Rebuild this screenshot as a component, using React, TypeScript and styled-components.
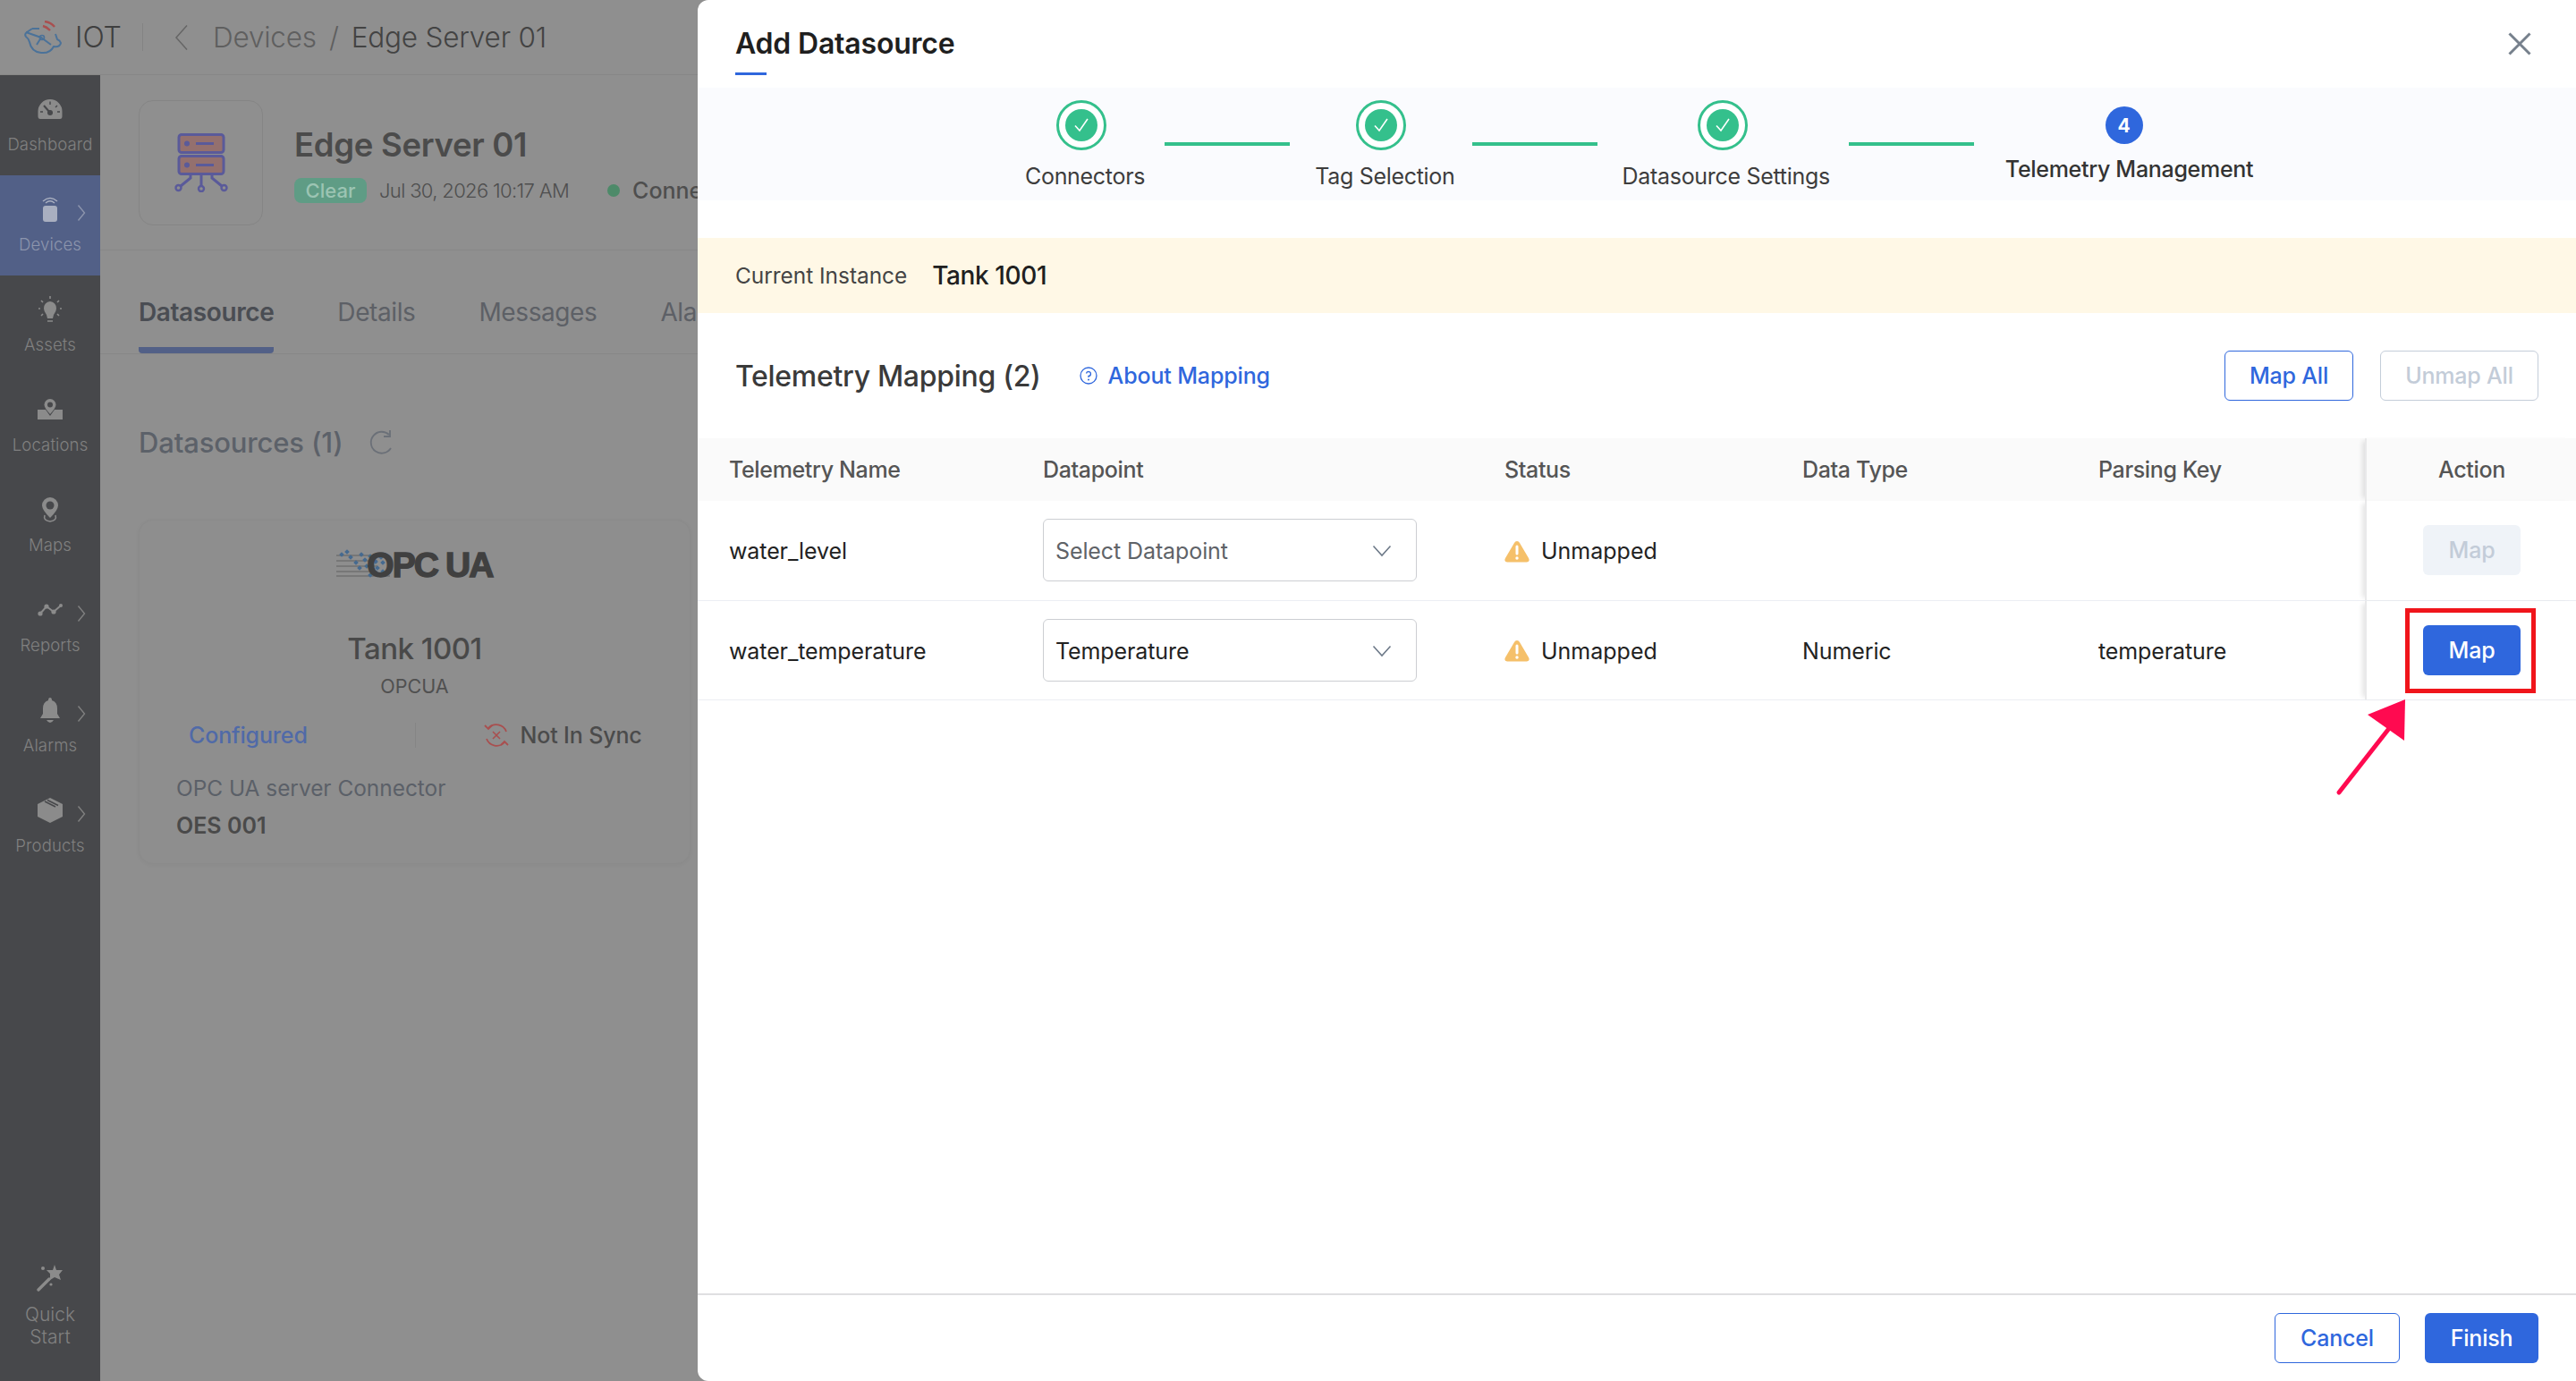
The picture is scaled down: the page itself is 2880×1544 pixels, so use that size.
import React from "react";
import styled, { createGlobalStyle } from "styled-components";

const Global = createGlobalStyle`
  html, body { margin: 0; padding: 0; background: #8f8f8f; }
  * { box-sizing: border-box; }
  body { font-family: Inter, "Noto Sans", "Liberation Sans", sans-serif; }
`;

const Page = styled.div`
  position: relative;
  width: 2880px;
  height: 1544px;
  overflow: hidden;
  background: #8f8f8f;
  display: flex;
  flex-direction: column;
`;

/* ---------- dimmed page behind the modal ---------- */
const TopBar = styled.header`
  height: 84px;
  flex: none;
  display: flex;
  align-items: center;
  padding-left: 26px;
  border-bottom: 1px solid #878787;
`;
const Brand = styled.span`
  font-size: 32px;
  font-weight: 300;
  color: #3f3f3f;
  margin-left: 14px;
  width: 50px;
`;
const BarDivider = styled.span`
  width: 1px;
  height: 31px;
  background: #838383;
  margin-left: 25px;
`;
const BackIcon = styled.svg`
  width: 16px;
  height: 30px;
  margin-left: 35px;
  margin-right: 27px;
`;
const Crumb = styled.span<{ $dark?: boolean }>`
  font-size: 31.5px;
  font-weight: 300;
  color: ${(p) => (p.$dark ? "#434343" : "#5f5f5f")};
  letter-spacing: -0.2px;
`;
const CrumbSlash = styled(Crumb)`
  margin: 0 14px;
  color: #5f5f5f;
`;
const Body = styled.div`
  flex: 1;
  display: flex;
  min-height: 0;
`;
const Sidebar = styled.nav`
  width: 112px;
  flex: none;
  background: #47484b;
  display: flex;
  flex-direction: column;
`;
const NavItem = styled.div<{ $active?: boolean }>`
  position: relative;
  height: 112px;
  display: flex;
  flex-direction: column;
  align-items: center;
  padding-top: 20px;
  background: ${(p) => (p.$active ? "#526087" : "transparent")};
  color: ${(p) => (p.$active ? "#8c95ad" : "#808080")};
`;
const NavIconSlot = styled.div`
  height: 36px;
  width: 36px;
  display: flex;
  align-items: center;
  justify-content: center;
  color: #8b8b8b;
`;
const NavLabel = styled.span`
  margin-top: 8px;
  font-size: 18.6px;
  line-height: 26px;
  font-weight: 300;
  letter-spacing: 0.1px;
  white-space: nowrap;
`;
const NavChevron = styled.svg`
  position: absolute;
  left: 86px;
  top: 32px;
  width: 10px;
  height: 20px;
`;
const NavSpacer = styled.div`
  flex: 1;
`;
const QuickItem = styled.div`
  height: 112px;
  margin-bottom: 21px;
  display: flex;
  flex-direction: column;
  align-items: center;
  color: #808080;
`;
const QuickLabel = styled.span`
  margin-top: 10px;
  font-size: 21px;
  line-height: 25px;
  font-weight: 300;
  text-align: center;
`;
const Main = styled.main`
  flex: 1;
  min-width: 0;
  color: #4a4a4a;
`;
const DeviceHead = styled.section`
  height: 196px;
  padding: 28px 0 0 43px;
  display: flex;
  border-bottom: 1px solid #878787;
`;
const DeviceTile = styled.div`
  width: 139px;
  height: 140px;
  border: 1px solid #858585;
  border-radius: 16px;
  display: flex;
  align-items: center;
  justify-content: center;
`;
const DeviceInfo = styled.div`
  margin-left: 35px;
  padding-top: 28px;
`;
const DeviceTitle = styled.div`
  font-size: 36.5px;
  line-height: 44px;
  font-weight: 600;
  color: #4b4b4b;
  letter-spacing: -0.3px;
`;
const MetaRow = styled.div`
  display: flex;
  align-items: center;
  margin-top: 14px;
  white-space: nowrap;
`;
const ClearBadge = styled.span`
  width: 81px;
  height: 28px;
  border-radius: 8px;
  background: #5f9c85;
  color: #9cc4b3;
  font-size: 22px;
  font-weight: 500;
  display: flex;
  align-items: center;
  justify-content: center;
`;
const MetaDate = styled.span`
  margin-left: 14px;
  font-size: 22px;
  font-weight: 300;
  color: #4e4e4e;
  letter-spacing: -0.65px;
`;
const StatusDot = styled.span`
  width: 14px;
  height: 14px;
  border-radius: 50%;
  background: #4d8a69;
  margin-left: 43px;
`;
const MetaState = styled.span`
  margin-left: 14px;
  font-size: 25px;
  font-weight: 500;
  color: #4e4e4e;
`;
const Tabs = styled.div`
  height: 116px;
  display: flex;
  align-items: flex-end;
  padding-left: 43px;
  gap: 71px;
  border-bottom: 1px solid #878787;
  white-space: nowrap;
`;
const Tab = styled.div<{ $active?: boolean }>`
  height: 76px;
  padding-top: 12px;
  font-size: 28px;
  line-height: 36px;
  font-weight: ${(p) => (p.$active ? 600 : 400)};
  color: ${(p) => (p.$active ? "#4a4d53" : "#5d6066")};
  border-bottom: 7px solid ${(p) => (p.$active ? "#526087" : "transparent")};
  border-radius: 0 0 4px 4px;
  letter-spacing: -0.4px;
`;
const SectionHead = styled.div`
  display: flex;
  align-items: center;
  padding: 79px 0 0 43px;
  gap: 29px;
`;
const SectionTitle = styled.h2`
  margin: 0;
  font-size: 31px;
  line-height: 40px;
  font-weight: 500;
  color: #5c6169;
  letter-spacing: -0.15px;
`;
const SourceCard = styled.article`
  margin: 66px 0 0 43px;
  width: 617px;
  height: 385px;
  border-radius: 16px;
  background: #8e8e8e;
  box-shadow: 0 1px 5px rgba(0, 0, 0, 0.04);
  border: 1px solid #8b8b8b;
  display: flex;
  flex-direction: column;
  align-items: center;
  padding-top: 31px;
`;
const OpcLogo = styled.div`
  position: relative;
  width: 176px;
  height: 34px;
  display: flex;
  justify-content: flex-end;
  align-items: flex-end;
`;
const OpcArt = styled.svg`
  position: absolute;
  left: 0;
  top: 0;
  width: 176px;
  height: 34px;
`;
const OpcWord = styled.span`
  position: relative;
  font-family: "Liberation Sans", Arial, sans-serif;
  font-size: 39px;
  line-height: 30px;
  font-weight: 700;
  color: #404040;
  letter-spacing: -1.9px;
  -webkit-text-stroke: 1.4px #404040;
  margin-right: 1px;
`;
const CardName = styled.div`
  margin-top: 57px;
  font-size: 33px;
  line-height: 42px;
  font-weight: 500;
  color: #494949;
  letter-spacing: -0.5px;
`;
const CardType = styled.div`
  margin-top: 7px;
  font-size: 21.5px;
  line-height: 28px;
  color: #505050;
`;
const CardStates = styled.div`
  width: 100%;
  margin-top: 27px;
  display: grid;
  grid-template-columns: 1fr 1fr;
`;
const CardState = styled.div<{ $blue?: boolean }>`
  height: 28px;
  display: flex;
  align-items: center;
  gap: 13px;
  font-size: 25px;
  font-weight: 500;
  letter-spacing: -0.15px;
  color: ${(p) => (p.$blue ? "#506aa8" : "#4b4b4b")};
  padding-left: ${(p) => (p.$blue ? "55px" : "76px")};
  & + & {
    border-left: 1px solid #858585;
  }
`;
const CardMeta = styled.div`
  width: 100%;
  padding-left: 41px;
  margin-top: 29px;
`;
const MetaLabel = styled.div`
  font-size: 24.4px;
  line-height: 32px;
  color: #5b6068;
  font-weight: 400;
`;
const MetaValue = styled.div`
  margin-top: 10px;
  font-size: 25px;
  line-height: 32px;
  font-weight: 600;
  color: #4a4a4a;
`;

/* ---------- modal ---------- */
const Modal = styled.section`
  position: absolute;
  top: 0;
  right: 0;
  bottom: 0;
  width: 2100px;
  background: #fff;
  border-radius: 12px 0 0 12px;
  display: flex;
  flex-direction: column;
  color: #222;
`;
const ModalHead = styled.div`
  position: relative;
  height: 98px;
  flex: none;
  padding: 30px 0 0 42px;
`;
const ModalTitle = styled.h1`
  margin: 0;
  font-size: 32px;
  line-height: 38px;
  font-weight: 600;
  color: #1f1f1f;
  letter-spacing: -0.2px;
`;
const TitleRule = styled.div`
  width: 35px;
  height: 3px;
  margin-top: 13px;
  background: #2f67dd;
`;
const CloseIcon = styled.svg`
  position: absolute;
  top: 36px;
  right: 50px;
  width: 26px;
  height: 26px;
`;
const Stepper = styled.div`
  height: 126px;
  flex: none;
  background: #fafbfe;
  display: flex;
  align-items: flex-start;
  padding: 14px 0 0 366px;
`;
const Step = styled.div`
  display: flex;
  flex-direction: column;
  align-items: center;
  white-space: nowrap;
`;
const DoneRing = styled.div`
  width: 56px;
  height: 56px;
  border-radius: 50%;
  border: 3px solid #34c08c;
  display: flex;
  align-items: center;
  justify-content: center;
  background: #fff;
  margin-right: 8px;
`;
const DoneDisc = styled.div`
  width: 36px;
  height: 36px;
  border-radius: 50%;
  background: #34c08c;
  display: flex;
  align-items: center;
  justify-content: center;
`;
const CurrentDisc = styled.div`
  width: 42px;
  height: 42px;
  margin-top: 7px;
  border-radius: 50%;
  background: #2f67dd;
  color: #fff;
  font-size: 21px;
  font-weight: 700;
  display: flex;
  align-items: center;
  justify-content: center;
  margin-right: 12px;
`;
const StepLabel = styled.span<{ $current?: boolean }>`
  margin-top: ${(p) => (p.$current ? "13px" : "14px")};
  font-size: 25px;
  line-height: 30px;
  font-weight: ${(p) => (p.$current ? 500 : 400)};
  color: ${(p) => (p.$current ? "#333" : "#3d3d3d")};
  letter-spacing: -0.3px;
`;
const StepLine = styled.div<{ $w: number; $l: number; $r: number }>`
  width: ${(p) => p.$w}px;
  height: 4px;
  margin: 47px ${(p) => p.$r}px 0 ${(p) => p.$l}px;
  background: #34c08c;
  flex: none;
`;
const Banner = styled.div`
  height: 84px;
  flex: none;
  margin-top: 42px;
  background: #fff8e6;
  display: flex;
  align-items: center;
  padding-left: 42px;
  gap: 28px;
`;
const BannerLabel = styled.span`
  font-size: 24.4px;
  color: #444;
`;
const BannerValue = styled.span`
  font-size: 28px;
  font-weight: 500;
  color: #202020;
  letter-spacing: -0.4px;
`;
const MapHead = styled.div`
  height: 140px;
  flex: none;
  display: flex;
  align-items: center;
  padding: 0 42px;
`;
const MapTitle = styled.h2`
  margin: 0;
  font-size: 32px;
  font-weight: 500;
  color: #3a3a3a;
  letter-spacing: -0.3px;
`;
const AboutLink = styled.a`
  display: flex;
  align-items: center;
  gap: 12px;
  margin-left: 43px;
  color: #2f67dd;
  font-size: 25px;
  font-weight: 500;
  letter-spacing: -0.15px;
`;
const HelpIcon = styled.svg`
  width: 20px;
  height: 20px;
`;
const HeadActions = styled.div`
  margin-left: auto;
  display: flex;
  gap: 30px;
`;
const Btn = styled.button<{ $kind: "outline" | "ghost" | "solid" | "off"; $w: number }>`
  width: ${(p) => p.$w}px;
  height: 56px;
  padding: 0;
  font-family: inherit;
  font-size: 25px;
  font-weight: 500;
  letter-spacing: -0.2px;
  border-radius: 6px;
  border: ${(p) =>
    p.$kind === "outline"
      ? "1.5px solid #2f67dd"
      : p.$kind === "ghost"
      ? "1.5px solid #c4cdd9"
      : "none"};
  background: ${(p) =>
    p.$kind === "solid" ? "#2f67dd" : p.$kind === "off" ? "#eff3f8" : "#fff"};
  color: ${(p) =>
    p.$kind === "solid"
      ? "#fff"
      : p.$kind === "outline"
      ? "#2f67dd"
      : "#c3ccd8"};
`;
const Table = styled.div`
  flex: 1;
  min-height: 0;
`;
const Row = styled.div<{ $head?: boolean }>`
  display: grid;
  grid-template-columns: 351px 516px 333px 331px 298px 236px;
  padding-left: 35px;
  height: ${(p) => (p.$head ? "70px" : "111.5px")};
  align-items: center;
  font-size: 25px;
  letter-spacing: ${(p) => (p.$head ? "-0.35px" : "-0.1px")};
  background: ${(p) => (p.$head ? "#fafafa" : "#fff")};
  color: ${(p) => (p.$head ? "#555" : "#222")};
  font-weight: ${(p) => (p.$head ? 500 : 400)};
  border-bottom: ${(p) => (p.$head ? "none" : "1.5px solid #eceef3")};
`;
const Cell = styled.div<{ $body?: boolean }>`
  padding-top: ${(p) => (p.$body ? "2px" : "0")};
`;
const ActionCell = styled.div`
  height: 100%;
  display: flex;
  align-items: center;
  justify-content: center;
  padding-left: 1px;
  border-left: 2px solid #e9e9ea;
  box-shadow: -6px 0 5px -3px rgba(0, 0, 0, 0.1);
  background: inherit;
`;
const Select = styled.div<{ $placeholder?: boolean }>`
  width: 418px;
  height: 70px;
  border: 1.5px solid #ccced2;
  border-radius: 6px;
  display: flex;
  align-items: center;
  justify-content: space-between;
  padding: 2px 27px 0 13px;
  color: ${(p) => (p.$placeholder ? "#5f6368" : "#222")};
`;
const Chevron = styled.svg`
  width: 22px;
  height: 14px;
`;
const StatusCell = styled.div`
  display: flex;
  align-items: center;
  gap: 13px;
  padding-top: 2px;
  letter-spacing: 0;
`;
const WarnIcon = styled.svg`
  width: 28px;
  height: 25px;
`;
const Footer = styled.footer`
  height: 98px;
  flex: none;
  border-top: 2px solid #dfdfe1;
  display: flex;
  justify-content: flex-end;
  gap: 28px;
  padding: 20px 42px 0 0;
`;
const CalloutBox = styled.div`
  position: absolute;
  left: 1909px;
  top: 680px;
  width: 146px;
  height: 95px;
  border: 5px solid #f0151b;
`;
const CalloutArrow = styled.svg`
  position: absolute;
  left: 1820px;
  top: 775px;
  width: 100px;
  height: 120px;
`;

const Check = () => (
  <svg width="20" height="18" viewBox="0 0 20 18">
    <path d="M3 9.5 L8 15 L17 2" fill="none" stroke="#fff" strokeWidth="1.6" />
  </svg>
);

const Arrow = () => (
  <NavChevron viewBox="0 0 10 20">
    <path d="M1.5 1.5 L8.5 10 L1.5 18.5" fill="none" stroke="currentColor" strokeWidth="1.4" />
  </NavChevron>
);

const navItems: { label: string; chevron?: boolean; active?: boolean; icon: React.ReactNode }[] = [
  {
    label: "Dashboard",
    icon: (
      <svg width="28" height="24" viewBox="0 0 28 24">
        <path d="M14 1 A13.5 13.5 0 0 1 27.5 15 V20 Q27.5 23 25 23 H3 Q.5 23 .5 20 V15 A13.5 13.5 0 0 1 14 1Z" fill="#8b8b8b" />
        <path d="M7 8 L14 16" stroke="#47484b" strokeWidth="2" />
        <circle cx="14" cy="16" r="3" fill="#47484b" />
        <path d="M14 3.5V7M22 8l-2 2M3 15h3M22 15h3" stroke="#47484b" strokeWidth="1.4" />
      </svg>
    ),
  },
  {
    label: "Devices",
    chevron: true,
    active: true,
    icon: (
      <svg width="20" height="30" viewBox="0 0 20 30">
        <rect x="2" y="11" width="16" height="18" rx="3" fill="#a9afc0" />
        <path d="M2 6 Q10 -1 18 6M5 8 Q10 3.5 15 8" fill="none" stroke="#a9afc0" strokeWidth="1.4" />
      </svg>
    ),
  },
  {
    label: "Assets",
    icon: (
      <svg width="26" height="30" viewBox="0 0 26 30">
        <path d="M13 6 A7.5 7.5 0 0 1 20 14 Q20 17 17 21 L16 25 H10 L9 21 Q6 17 6 14 A7.5 7.5 0 0 1 13 6Z" fill="#8b8b8b" />
        <path d="M10 28h6M13 0v3M3 5l2 2M23 5l-2 2M0 14h2M24 14h2M3 22l2-2M23 22l-2-2" stroke="#8b8b8b" strokeWidth="1.6" />
      </svg>
    ),
  },
  {
    label: "Locations",
    icon: (
      <svg width="28" height="24" viewBox="0 0 28 24">
        <path d="M0 12 L9 12 L14 19 L19 12 L28 12 V23 H0Z" fill="#8b8b8b" />
        <path d="M14 0 A6.5 6.5 0 0 1 20.5 6.5 Q20.5 10 14 17 Q7.5 10 7.5 6.5 A6.5 6.5 0 0 1 14 0Z" fill="#8b8b8b" />
        <circle cx="14" cy="6.5" r="3" fill="#47484b" />
      </svg>
    ),
  },
  {
    label: "Maps",
    icon: (
      <svg width="20" height="28" viewBox="0 0 20 28">
        <path d="M10 0 A9 9 0 0 1 19 9 Q19 14 10 23 Q1 14 1 9 A9 9 0 0 1 10 0Z" fill="#8b8b8b" />
        <circle cx="10" cy="9" r="4.5" fill="#47484b" />
        <path d="M4 20 Q2 26 10 27 Q18 26 16 20" fill="none" stroke="#8b8b8b" strokeWidth="1.6" />
      </svg>
    ),
  },
  {
    label: "Reports",
    chevron: true,
    icon: (
      <svg width="28" height="14" viewBox="0 0 28 14">
        <path d="M3 11 L10 3 L18 9 L26 2" fill="none" stroke="#8b8b8b" strokeWidth="2" />
        <circle cx="3" cy="11" r="2.6" fill="#8b8b8b" />
        <circle cx="10" cy="3" r="2.6" fill="#8b8b8b" />
        <circle cx="18" cy="9" r="2.6" fill="#8b8b8b" />
        <circle cx="26" cy="2" r="2" fill="#8b8b8b" />
      </svg>
    ),
  },
  {
    label: "Alarms",
    chevron: true,
    icon: (
      <svg width="22" height="28" viewBox="0 0 22 28">
        <path d="M11 0 Q13 0 13 3 Q19 5 19 12 V18 L22 23 H0 L3 18 V12 Q3 5 9 3 Q9 0 11 0Z" fill="#8b8b8b" />
        <path d="M7 25 H15 Q13 28 11 28 Q9 28 7 25Z" fill="#8b8b8b" />
      </svg>
    ),
  },
  {
    label: "Products",
    chevron: true,
    icon: (
      <svg width="28" height="28" viewBox="0 0 28 28">
        <path d="M14 0 L28 7 V21 L14 28 L0 21 V7Z" fill="#8b8b8b" />
        <path d="M8 4 L20 10M11 2.5 L23 8.5" stroke="#47484b" strokeWidth="1.4" />
      </svg>
    ),
  },
];

const rows = [
  { name: "water_level", point: "Select Datapoint", placeholder: true, type: "", key: "", enabled: false },
  { name: "water_temperature", point: "Temperature", placeholder: false, type: "Numeric", key: "temperature", enabled: true },
];

export default function App() {
  return (
    <Page>
      <Global />
      <TopBar>
        <svg width="44" height="38" viewBox="0 0 44 38">
          <path d="M10 9 L4 13 Q1 15 3 18 Q6 20 7 24 Q9 35 20 36 Q30 37 34 29 Q41 30 42 25 Q41 22 38 21 L36 15" fill="none" stroke="#4b7299" strokeWidth="2" />
          <path d="M3 13 L20 19 L31 27M20 19 L15 27M18 9 L10 9" fill="none" stroke="#4b7299" strokeWidth="2" />
          <circle cx="21" cy="19" r="2.5" fill="none" stroke="#4b7299" strokeWidth="1.6" />
          <path d="M24 1 Q31 2 35 7M22 6 Q26 7 30 11" fill="none" stroke="#a94f4f" strokeWidth="2.4" />
        </svg>
        <Brand>IOT</Brand>
        <BarDivider />
        <BackIcon viewBox="0 0 16 30">
          <path d="M14 1.5 L2 15 L14 28.5" fill="none" stroke="#666" strokeWidth="1.5" />
        </BackIcon>
        <Crumb>Devices</Crumb>
        <CrumbSlash>/</CrumbSlash>
        <Crumb $dark>Edge Server 01</Crumb>
      </TopBar>
      <Body>
        <Sidebar>
          {navItems.map((n) => (
            <NavItem key={n.label} $active={n.active}>
              <NavIconSlot>{n.icon}</NavIconSlot>
              <NavLabel>{n.label}</NavLabel>
              {n.chevron && <Arrow />}
            </NavItem>
          ))}
          <NavSpacer />
          <QuickItem>
            <NavIconSlot>
              <svg width="30" height="30" viewBox="0 0 30 30">
                <path d="M20 0 L22 6 L29 6 L25 11 L27 17 L20 14 L15 17 L15 10 L11 6 L18 6Z" fill="#8b8b8b" />
                <path d="M14 16 L2 28" stroke="#8b8b8b" strokeWidth="3.4" strokeLinecap="round" />
                <circle cx="7" cy="4" r="2" fill="#8b8b8b" />
                <circle cx="16" cy="22" r="1.6" fill="#8b8b8b" />
              </svg>
            </NavIconSlot>
            <QuickLabel>
              Quick
              <br />
              Start
            </QuickLabel>
          </QuickItem>
        </Sidebar>
        <Main>
          <DeviceHead>
            <DeviceTile>
              <svg width="60" height="66" viewBox="0 0 60 66">
                <rect x="5" y="1.5" width="50" height="20" rx="3" fill="#94706e" stroke="#5a5a9a" strokeWidth="3" />
                <rect x="5" y="25.5" width="50" height="20" rx="3" fill="#94706e" stroke="#5a5a9a" strokeWidth="3" />
                <circle cx="14" cy="11.5" r="3" fill="#5a5a9a" />
                <circle cx="14" cy="35.5" r="3" fill="#5a5a9a" />
                <path d="M24 11.5 H44M24 35.5 H44M30 46 V60M18 46 V50 L7 59M42 46 V50 L53 59" fill="none" stroke="#5a5a9a" strokeWidth="3" />
                <circle cx="4.5" cy="61" r="3" fill="none" stroke="#5a5a9a" strokeWidth="2.4" />
                <circle cx="30" cy="62" r="3" fill="none" stroke="#5a5a9a" strokeWidth="2.4" />
                <circle cx="55.5" cy="61" r="3" fill="none" stroke="#5a5a9a" strokeWidth="2.4" />
              </svg>
            </DeviceTile>
            <DeviceInfo>
              <DeviceTitle>Edge Server 01</DeviceTitle>
              <MetaRow>
                <ClearBadge>Clear</ClearBadge>
                <MetaDate>Jul 30, 2026 10:17 AM</MetaDate>
                <StatusDot />
                <MetaState>Connected</MetaState>
              </MetaRow>
            </DeviceInfo>
          </DeviceHead>
          <Tabs>
            <Tab $active>Datasource</Tab>
            <Tab>Details</Tab>
            <Tab>Messages</Tab>
            <Tab>Alarms</Tab>
          </Tabs>
          <SectionHead>
            <SectionTitle>Datasources (1)</SectionTitle>
            <svg width="30" height="30" viewBox="0 0 30 30">
              <path d="M25 21 A12 12 0 1 1 23 6" fill="none" stroke="#6b7078" strokeWidth="1.8" />
              <path d="M24 1 V8 H17" fill="none" stroke="#6b7078" strokeWidth="1.8" />
            </svg>
          </SectionHead>
          <SourceCard>
            <OpcLogo>
              <OpcArt viewBox="0 0 176 34">
                <path d="M0 8H46M0 14H46M0 20H46M0 26H46M0 31H60" stroke="#707070" strokeWidth="1.4" />
                {[
                  [4, 5], [10, 2], [14, 8], [20, 14], [26, 5], [30, 11], [36, 7], [42, 13],
                  [24, 20], [32, 18], [38, 22], [44, 20], [48, 8], [50, 14], [36, 28], [44, 28], [50, 24],
                ].map(([x, y]) => (
                  <rect key={`${x}-${y}`} x={x} y={y} width="4" height="4" fill="#456a90" transform={`rotate(45 ${x + 2} ${y + 2})`} />
                ))}
              </OpcArt>
              <OpcWord>OPC UA</OpcWord>
            </OpcLogo>
            <CardName>Tank 1001</CardName>
            <CardType>OPCUA</CardType>
            <CardStates>
              <CardState $blue>Configured</CardState>
              <CardState>
                <svg width="28" height="28" viewBox="0 0 28 28">
                  <path d="M5 6 A12 12 0 0 1 25 10M23 22 A12 12 0 0 1 3 18" fill="none" stroke="#a94f4f" strokeWidth="1.8" />
                  <path d="M1 3 L5 7 L9 3M19 25 L23 21 L27 25" fill="none" stroke="#a94f4f" strokeWidth="1.8" />
                  <path d="M10 10 L18 18M18 10 L10 18" stroke="#a94f4f" strokeWidth="1.6" />
                </svg>
                Not In Sync
              </CardState>
            </CardStates>
            <CardMeta>
              <MetaLabel>OPC UA server Connector</MetaLabel>
              <MetaValue>OES 001</MetaValue>
            </CardMeta>
          </SourceCard>
        </Main>
      </Body>

      <Modal>
        <ModalHead>
          <ModalTitle>Add Datasource</ModalTitle>
          <TitleRule />
          <CloseIcon viewBox="0 0 26 26">
            <path d="M1.5 1.5 L24.5 24.5M24.5 1.5 L1.5 24.5" stroke="#76808c" strokeWidth="3" />
          </CloseIcon>
        </ModalHead>
        <Stepper>
          <Step>
            <DoneRing><DoneDisc><Check /></DoneDisc></DoneRing>
            <StepLabel>Connectors</StepLabel>
          </Step>
          <StepLine $w={140} $l={22} $r={28} />
          <Step>
            <DoneRing><DoneDisc><Check /></DoneDisc></DoneRing>
            <StepLabel>Tag Selection</StepLabel>
          </Step>
          <StepLine $w={140} $l={19} $r={28} />
          <Step>
            <DoneRing><DoneDisc><Check /></DoneDisc></DoneRing>
            <StepLabel>Datasource Settings</StepLabel>
          </Step>
          <StepLine $w={140} $l={21} $r={35} />
          <Step>
            <CurrentDisc>4</CurrentDisc>
            <StepLabel $current>Telemetry Management</StepLabel>
          </Step>
        </Stepper>
        <Banner>
          <BannerLabel>Current Instance</BannerLabel>
          <BannerValue>Tank 1001</BannerValue>
        </Banner>
        <MapHead>
          <MapTitle>Telemetry Mapping (2)</MapTitle>
          <AboutLink>
            <HelpIcon viewBox="0 0 20 20">
              <circle cx="10" cy="10" r="9" fill="none" stroke="#2f67dd" strokeWidth="1.3" />
              <path d="M7.5 7.5 A2.5 2.5 0 1 1 10 10.5 V12" fill="none" stroke="#2f67dd" strokeWidth="1.3" />
              <circle cx="10" cy="14.5" r="1" fill="#2f67dd" />
            </HelpIcon>
            About Mapping
          </AboutLink>
          <HeadActions>
            <Btn $kind="outline" $w={144}>Map All</Btn>
            <Btn $kind="ghost" $w={177}>Unmap All</Btn>
          </HeadActions>
        </MapHead>
        <Table>
          <Row $head>
            <Cell>Telemetry Name</Cell>
            <Cell>Datapoint</Cell>
            <Cell>Status</Cell>
            <Cell>Data Type</Cell>
            <Cell>Parsing Key</Cell>
            <ActionCell>Action</ActionCell>
          </Row>
          {rows.map((r) => (
            <Row key={r.name}>
              <Cell $body>{r.name}</Cell>
              <Select $placeholder={r.placeholder}>
                {r.point}
                <Chevron viewBox="0 0 22 14">
                  <path d="M1.5 1.5 L11 12 L20.5 1.5" fill="none" stroke="#6d7988" strokeWidth="1.6" />
                </Chevron>
              </Select>
              <StatusCell>
                <WarnIcon viewBox="0 0 28 25">
                  <path d="M14 1 Q16 1 17 3 L27 20 Q29 24 25 24.5 H3 Q-1 24 1 20 L11 3 Q12 1 14 1Z" fill="#f5c06a" />
                  <path d="M14 7 V15" stroke="#fff" strokeWidth="3" strokeLinecap="round" />
                  <circle cx="14" cy="20" r="1.7" fill="#fff" />
                </WarnIcon>
                Unmapped
              </StatusCell>
              <Cell $body>{r.type}</Cell>
              <Cell $body>{r.key}</Cell>
              <ActionCell>
                <Btn $kind={r.enabled ? "solid" : "off"} $w={109}>Map</Btn>
              </ActionCell>
            </Row>
          ))}
        </Table>
        <Footer>
          <Btn $kind="outline" $w={140}>Cancel</Btn>
          <Btn $kind="solid" $w={127}>Finish</Btn>
        </Footer>
        <CalloutBox />
        <CalloutArrow viewBox="0 0 100 120">
          <path d="M15 111 L76 33" stroke="#ff0a50" strokeWidth="5" strokeLinecap="round" />
          <path d="M89 7 L47 24 L88 53Z" fill="#ff0a50" />
        </CalloutArrow>
      </Modal>
    </Page>
  );
}
